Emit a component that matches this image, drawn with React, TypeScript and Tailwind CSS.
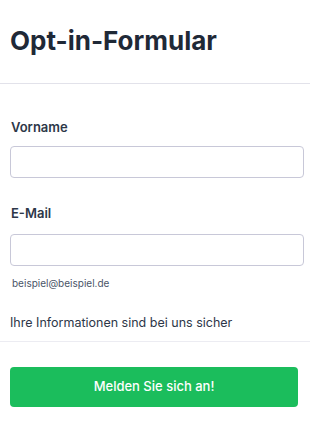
import React from "react";

export default function App() {
  return (
    <div className="w-[310px] h-[432px] bg-white" style={{ fontFamily: "Inter, 'Noto Sans', sans-serif" }}>
      <div className="h-[84px] border-b border-[#e2e2ea] px-[10px] pt-[25px]">
        <h1 className="text-[26px] leading-[32px] font-bold text-[#1f2937]">Opt-in-Formular</h1>
      </div>
      <div className="px-[10px] pt-[33px] h-[258px] border-b border-[#ececf2]">
        <label className="block text-[13px] leading-[20px] font-semibold text-[#2d3748] pl-[1px]">Vorname</label>
        <input type="text" className="mt-[9px] block w-[294px] h-[32px] rounded-[4px] border border-[#c8c8d8] bg-white" />
        <label className="mt-[25px] block text-[13px] leading-[20px] font-semibold text-[#2d3748] pl-[1px]">E-Mail</label>
        <input type="email" className="mt-[11px] block w-[294px] h-[32px] rounded-[4px] border border-[#c8c8d8] bg-white" />
        <p className="mt-[10px] text-[10px] leading-[14px] text-[#4a5568] pl-[2px]">beispiel@beispiel.de</p>
        <p className="mt-[25px] text-[12.5px] leading-[16px] text-[#2d3748]">Ihre Informationen sind bei uns sicher</p>
      </div>
      <div className="px-[10px] pt-[25px]">
        <button className="w-[288px] h-[40px] rounded-[4px] bg-[#1bbd5c] text-white text-[13px] font-medium">
          Melden Sie sich an!
        </button>
      </div>
    </div>
  );
}
